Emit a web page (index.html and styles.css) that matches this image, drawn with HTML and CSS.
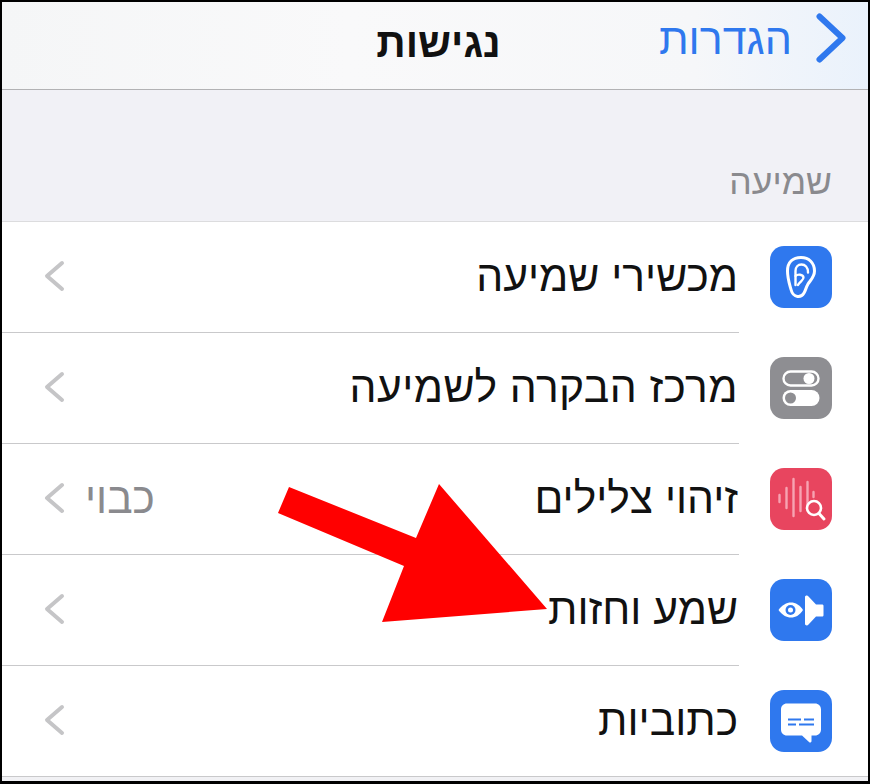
FILE: index.html
```html
<!DOCTYPE html>
<html lang="he" dir="rtl">
<head>
<meta charset="utf-8">
<title>נגישות</title>
<link rel="stylesheet" href="styles.css">
</head>
<body>
<div class="frame">
  <header class="nav">
    <div class="back">
      <svg class="back-chev" width="32" height="50" viewBox="0 0 32 50"><path d="M3.500 3.500 26.500 25 3.500 46.500" fill="none" stroke="#2f78ee" stroke-width="6" stroke-linecap="round" stroke-linejoin="round"/></svg>
      <span class="back-label">הגדרות</span>
    </div>
    <h1 class="title">נגישות</h1>
  </header>
  <div class="section-head"><span>שמיעה</span></div>
  <ul class="list">
    <li class="row">
      <span class="icon blue">
        <svg width="62" height="62" viewBox="0 0 62 62"><g fill="none" stroke="#fff" stroke-linecap="round" stroke-linejoin="round"><path stroke-width="3" d="M17.500 25c0-9 5.500-13.500 13.500-13.500 8 0 13.500 5.500 13.500 13.500 0 6-4 9-6.500 13-2 3.500-2.500 6.500-4 9-1.500 2.500-3.500 4-6.500 3.500-3.500-.5-5.500-3-6.500-7-1.500-5.500-3.500-11-3.500-18.500Z"/><path stroke-width="2.400" d="M25.500 39v-14c0-4 2.500-6.500 6-6.500s6.500 2.500 6.500 8"/><path stroke-width="2.400" d="M25.500 30c2-2 7.500-2 8 1.500 .3 2.500-3.500 4-5.500 7.500"/></g></svg>
      </span>
      <span class="label">מכשירי שמיעה</span>
      <svg class="chev" width="22" height="32" viewBox="0 0 22 32"><path d="M19 3 4 16 19 29" fill="none" stroke="#c5c5c7" stroke-width="4" stroke-linecap="round" stroke-linejoin="round"/></svg>
    </li>
    <li class="row">
      <span class="icon gray">
        <svg width="62" height="62" viewBox="0 0 62 62"><rect x="13.500" y="14.500" width="35" height="14" rx="7" fill="none" stroke="#fff" stroke-width="2.400"/><circle cx="39" cy="21.500" r="5.500" fill="#fff"/><rect x="12.500" y="33" width="37" height="16" rx="8" fill="#fff"/><circle cx="20.500" cy="41" r="5.500" fill="#8e8e92"/></svg>
      </span>
      <span class="label label-wide">מרכז הבקרה לשמיעה</span>
      <svg class="chev" width="22" height="32" viewBox="0 0 22 32"><path d="M19 3 4 16 19 29" fill="none" stroke="#c5c5c7" stroke-width="4" stroke-linecap="round" stroke-linejoin="round"/></svg>
    </li>
    <li class="row">
      <span class="icon red">
        <svg width="62" height="62" viewBox="0 0 62 62"><g stroke="#f7a3b2" stroke-width="2.400" stroke-linecap="round"><path d="M9.500 27v7"/><path d="M16.500 20v20"/><path d="M23.500 11v37"/><path d="M30.500 19v24"/><path d="M37.500 14v22"/><path d="M43.500 24v5"/></g><circle cx="44" cy="40" r="7" fill="#e8455f" stroke="#fff" stroke-width="2.600"/><path d="M49 45.500 54 51" stroke="#fff" stroke-width="3" stroke-linecap="round"/></svg>
      </span>
      <span class="label">זיהוי צלילים</span>
      <span class="value">כבוי</span>
      <svg class="chev" width="22" height="32" viewBox="0 0 22 32"><path d="M19 3 4 16 19 29" fill="none" stroke="#c5c5c7" stroke-width="4" stroke-linecap="round" stroke-linejoin="round"/></svg>
    </li>
    <li class="row">
      <span class="icon blue">
        <svg width="62" height="62" viewBox="0 0 62 62"><path d="M8.500 31c3.500-5 8-7.500 12.500-7.500S30 26 33 31c-3 5-7.500 7.500-12 7.500S12 36 8.500 31Z" fill="#fff"/><circle cx="20.500" cy="31" r="5" fill="#2f78ee"/><circle cx="20.500" cy="31" r="2.500" fill="#fff"/><path d="M35 18c0-1.500 2.500-2 3.500-.5l7.500 8h6c1 0 1.500.5 1.500 1.500v9c0 1-.5 1.500-1.500 1.500h-6l-7.500 8c-1 1.500-3.500 1-3.500-.5Z" fill="#fff"/></svg>
      </span>
      <span class="label">שמע וחזות</span>
      <svg class="chev" width="22" height="32" viewBox="0 0 22 32"><path d="M19 3 4 16 19 29" fill="none" stroke="#c5c5c7" stroke-width="4" stroke-linecap="round" stroke-linejoin="round"/></svg>
    </li>
    <li class="row">
      <span class="icon blue">
        <svg width="62" height="62" viewBox="0 0 62 62"><path d="M17 13.500h28c3.500 0 6 2.500 6 6v20c0 3.500-2.500 6-6 6h-3.500v5.500c0 1.500-1.500 2-2.500 1l-7-6.500H17c-3.500 0-6-2.500-6-6v-20c0-3.500 2.500-6 6-6Z" fill="#fff"/><path d="M18 29.500h13M34 29.500h10M18 34.500h8M29 34.500h15" stroke="#2f78ee" stroke-width="1.800"/></svg>
      </span>
      <span class="label">כתוביות</span>
      <svg class="chev" width="22" height="32" viewBox="0 0 22 32"><path d="M19 3 4 16 19 29" fill="none" stroke="#c5c5c7" stroke-width="4" stroke-linecap="round" stroke-linejoin="round"/></svg>
    </li>
  </ul>
  <div class="foot"></div>
  <svg class="arrow" width="290" height="160" viewBox="0 0 290 160"><path d="M19 7 8 33 134 86 112 142 277 129 169 4 146 58Z" fill="#ff0000"/></svg>
</div>
</body>
</html>
```

FILE: styles.css
```css
* { box-sizing: border-box; }
html, body { margin: 0; padding: 0; background: #000; }
body { width: 870px; height: 784px; overflow: hidden; font-family: "Liberation Sans", "DejaVu Sans", sans-serif; }
.frame { position: relative; width: 866px; height: 779px; margin: 2px 2px 0; background: #fff; display: flex; flex-direction: column; overflow: hidden; }
.nav { height: 88px; flex: none; display: flex; align-items: center; justify-content: center; position: relative; background: linear-gradient(90deg, #f5f6f7 0%, #f9f9fa 40%, #f6f7f9 80%, #eaf2fc 100%); border-bottom: 1px solid #b2b2b4; }
.title { margin: 0 0 0 7px; font-size: 41px; font-weight: 700; color: #111; line-height: 1; position: relative; top: -2px; }
.back { position: absolute; right: 20px; top: 12px; display: flex; align-items: center; gap: 24px; }
.back-label { font-size: 43px; color: #2f78ee; line-height: 50px; }
.back-chev { display: block; margin-top: -3px; }
.section-head { height: 132px; flex: none; background: #f1f1f6; border-bottom: 1px solid #dcdcde; display: flex; align-items: flex-end; padding: 0 36px 19px; }
.section-head span { font-size: 35.5px; line-height: 40px; color: #8a8a8e; }
.list { list-style: none; margin: 0; padding: 0; flex: none; }
.row { height: 111px; display: flex; align-items: center; padding-right: 36px; position: relative; }
.row::after { content: ""; position: absolute; left: 0; right: 129px; bottom: 0; height: 1px; background: #c9c9cb; }
.row:last-child::after { right: 0; }
.icon { width: 62px; height: 62px; border-radius: 14px; flex: none; display: block; margin: -2px 0 0 32px; }
.icon svg { display: block; }
.blue { background: #2f78ee; }
.gray { background: #8e8e92; }
.red { background: #e8455f; }
.label { font-size: 42.6px; color: #111; line-height: 50px; flex: 1; margin-top: -4px; }
.label-wide { letter-spacing: 0.43px; }
.value { font-size: 42.6px; color: #8a8a8e; line-height: 50px; margin: -4px 0 0 20px; }
.chev { margin-left: 41px; flex: none; margin-top: -3px; }
.foot { flex: 1; background: #f1f1f4; }
.arrow { position: absolute; left: 268px; top: 478px; }
```
